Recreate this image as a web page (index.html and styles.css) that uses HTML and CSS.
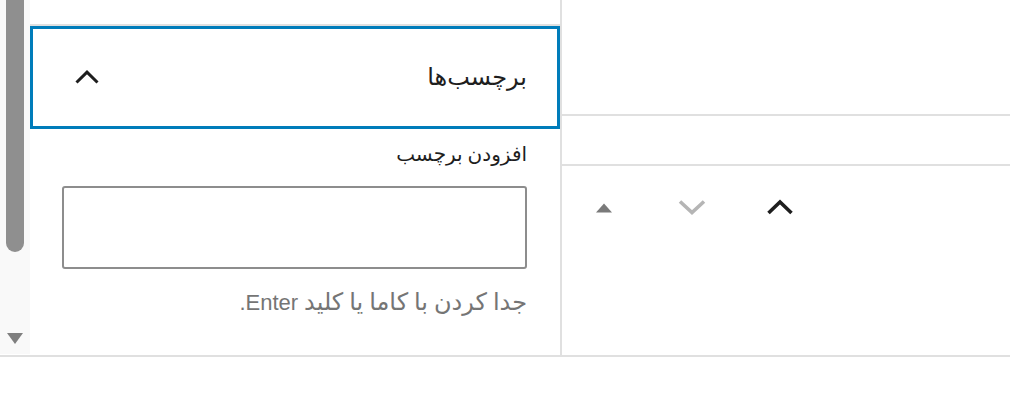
FILE: index.html
```html
<!DOCTYPE html>
<html lang="fa">
<head>
<meta charset="utf-8">
<title>برچسب‌ها</title>
<link rel="stylesheet" href="styles.css">
</head>
<body>
<div class="screen">
  <div class="scrolltrack">
    <div class="thumb"></div>
    <svg class="scroll-arrow" width="16" height="12" viewBox="0 0 16 12"><polygon points="0,0 16,0 8,11" fill="#7f7f7f"/></svg>
  </div>
  <aside class="sidebar" dir="rtl">
    <div class="panel">
      <button class="panel-header" type="button">
        <span class="panel-title">برچسب‌ها</span>
        <svg class="chev" width="24" height="14" viewBox="0 0 24 14"><path d="M1.5 12.5 L12 2.2 L22.5 12.5" fill="none" stroke="#1e1e1e" stroke-width="3"/></svg>
      </button>
      <div class="panel-body">
        <label class="field-label" for="tag">افزودن برچسب</label>
        <input class="field-input" id="tag" type="text">
        <p class="help">جدا کردن با کاما یا کلید <span class="latin">Enter.</span></p>
      </div>
    </div>
  </aside>
  <section class="canvas">
    <div class="row row-top"></div>
    <div class="row row-mid"></div>
    <div class="row row-tools">
      <svg class="ico ico-tri" width="16" height="10" viewBox="0 0 16 10"><polygon points="0,9.5 8,0.5 16,9.5" fill="#7a7a7a"/></svg>
      <svg class="ico ico-down" width="28" height="16" viewBox="0 0 28 16"><path d="M2 2.5 L14 13.5 L26 2.5" fill="none" stroke="#b5b5b5" stroke-width="3.6"/></svg>
      <svg class="ico ico-up" width="26" height="16" viewBox="0 0 26 16"><path d="M1.5 14 L13 3 L24.5 14" fill="none" stroke="#1e1e1e" stroke-width="3.6"/></svg>
    </div>
  </section>
</div>
</body>
</html>
```

FILE: styles.css
```css
* { box-sizing: border-box; }
html, body {
  margin: 0;
  padding: 0;
  background: #fff;
}
body {
  width: 1010px;
  height: 406px;
  overflow: hidden;
  font-family: Roboto, "DejaVu Sans", sans-serif;
  color: #1e1e1e;
}
.screen {
  display: flex;
  height: 357px;
  border-bottom: 2px solid #e0e0e0;
}
.scrolltrack {
  width: 30px;
  height: 354px;
  background: #f9f9f9;
  display: flex;
  flex-direction: column;
  align-items: flex-start;
}
.thumb {
  margin-left: 6px;
  width: 18px;
  height: 252px;
  background: #8f8f8f;
  border-radius: 0 0 9px 9px;
}
.scroll-arrow {
  display: block;
  margin-top: auto;
  margin-left: 7px;
  margin-bottom: 9px;
}
.sidebar {
  width: 530px;
  height: 355px;
  padding-top: 24px;
}
.panel {
  border-top: 2px solid #e0e0e0;
}
.panel-header {
  display: flex;
  align-items: center;
  justify-content: space-between;
  width: 100%;
  height: 103px;
  margin: 0;
  padding: 0 30px 0 0;
  background: #fff;
  border: 3px solid #007cba;
  font: inherit;
  cursor: pointer;
}
.panel-title {
  font-size: 24px;
  color: #1e1e1e;
  line-height: 1;
  padding-bottom: 2px;
}
.chev {
  display: block;
  margin-left: 42px;
  margin-bottom: 2px;
}
.panel-body {
  padding: 12px 33px 0 32px;
  display: flex;
  flex-direction: column;
  align-items: stretch;
}
.field-label {
  font-size: 20px;
  line-height: 26px;
  color: #1e1e1e;
}
.field-input {
  margin-top: 19px;
  height: 83px;
  border: 2px solid #8d8d8d;
  border-radius: 3px;
  background: #fff;
  font: inherit;
}
.help {
  margin: 19px 0 0;
  font-size: 24px;
  line-height: 28px;
  color: #757575;
}
.latin {
  font-family: "Liberation Sans", Arial, sans-serif;
  font-size: 22px;
}
.canvas {
  flex: 1;
  height: 355px;
  border-left: 2px solid #e0e0e0;
  display: flex;
  flex-direction: column;
}
.row-top {
  height: 116px;
  border-bottom: 2px solid #e0e0e0;
}
.row-mid {
  height: 50px;
  border-bottom: 2px solid #e0e0e0;
}
.row-tools {
  display: flex;
  align-items: center;
  padding-top: 33px;
}
.ico { display: block; }
.ico-tri { margin-left: 34px; margin-top: 2px; }
.ico-down { margin-left: 66px; }
.ico-up { margin-left: 61px; }
```
